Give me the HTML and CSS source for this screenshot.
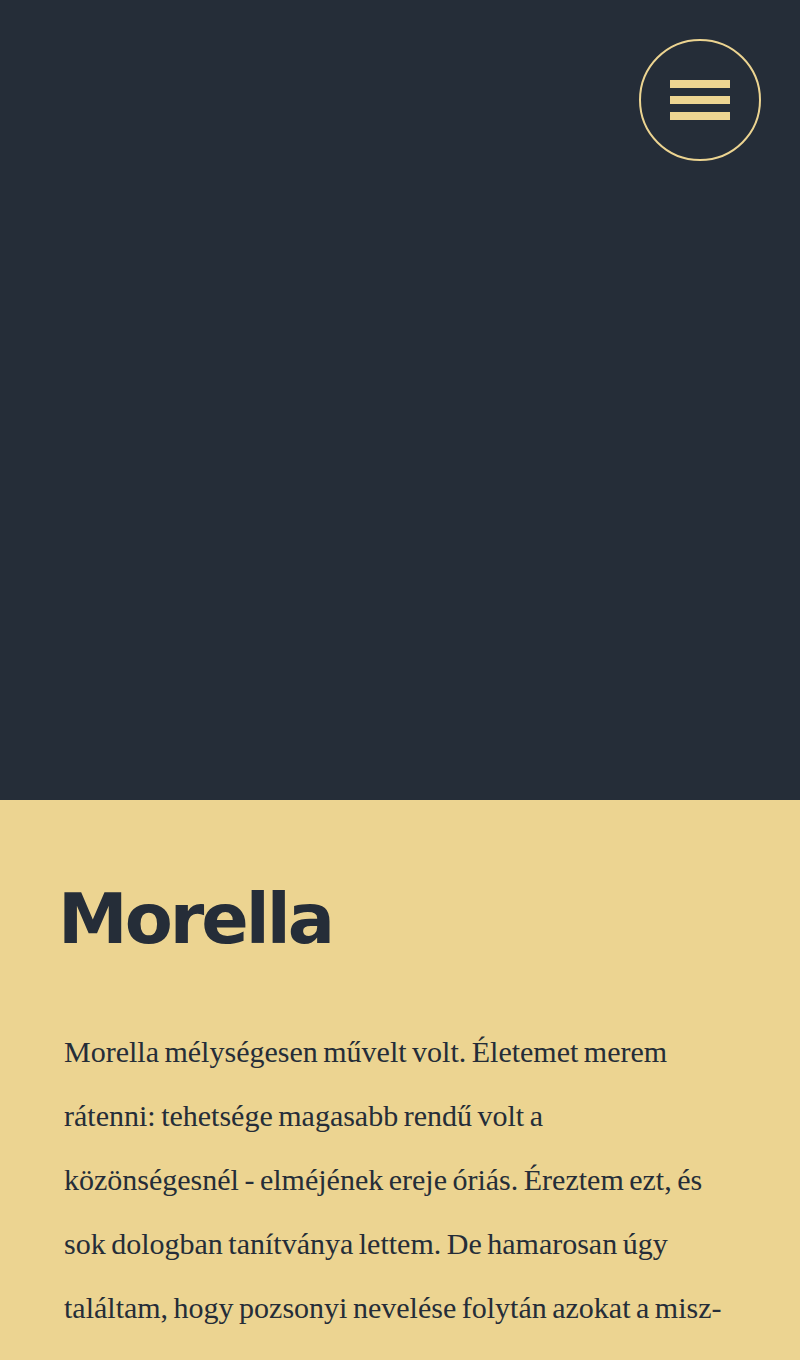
FILE: index.html
```html
<!DOCTYPE html>
<html lang="hu">
<head>
<meta charset="utf-8">
<title>Morella</title>
<link rel="stylesheet" href="styles.css">
</head>
<body>
<header class="hero">
  <button class="menu-btn" aria-label="Menü">
    <span class="bar"></span>
    <span class="bar"></span>
    <span class="bar"></span>
  </button>
</header>
<main class="content">
  <h1 class="title">Morella</h1>
  <p class="text">Morella mélységesen művelt volt. Életemet merem rátenni: tehetsége magasabb rendű volt a közönségesnél - elméjének ereje óriás. Éreztem ezt, és sok dologban tanítványa lettem. De hamarosan úgy találtam, hogy pozsonyi nevelése folytán azokat a misz&shy;tikus írásokat tette elém, amelyeket a korai német irodalom salakjának szokás tekinteni.</p>
</main>
</body>
</html>
```
FILE: styles.css
```css
html, body {
  margin: 0;
  padding: 0;
}
body {
  background: #ecd491;
  color: #252d38;
}
.hero {
  height: 800px;
  box-sizing: border-box;
  background: #252d38;
  display: flex;
  justify-content: flex-end;
  align-items: flex-start;
  padding: 40px 40px 0 0;
}
.menu-btn {
  width: 122px;
  height: 122px;
  margin: -1px -1px 0 0;
  box-sizing: border-box;
  border: 2px solid #ecd491;
  border-radius: 50%;
  background: transparent;
  padding: 0;
  display: flex;
  flex-direction: column;
  align-items: center;
  justify-content: center;
  gap: 8px;
  cursor: pointer;
}
.bar {
  display: block;
  width: 60px;
  height: 8px;
  background: #ecd491;
}
.content {
  padding: 69px 64px 0 64px;
}
.title {
  margin: 0 0 0 -6px;
  font-family: "DejaVu Sans", sans-serif;
  font-weight: bold;
  font-size: 70px;
  letter-spacing: -3px;
  line-height: 100px;
}
.text {
  margin: 51px 0 0 0;
  font-family: "Liberation Serif", serif;
  font-size: 30px;
  word-spacing: -2px;
  line-height: 64px;
  max-width: 658.5px;
  hyphens: manual;
}
```
